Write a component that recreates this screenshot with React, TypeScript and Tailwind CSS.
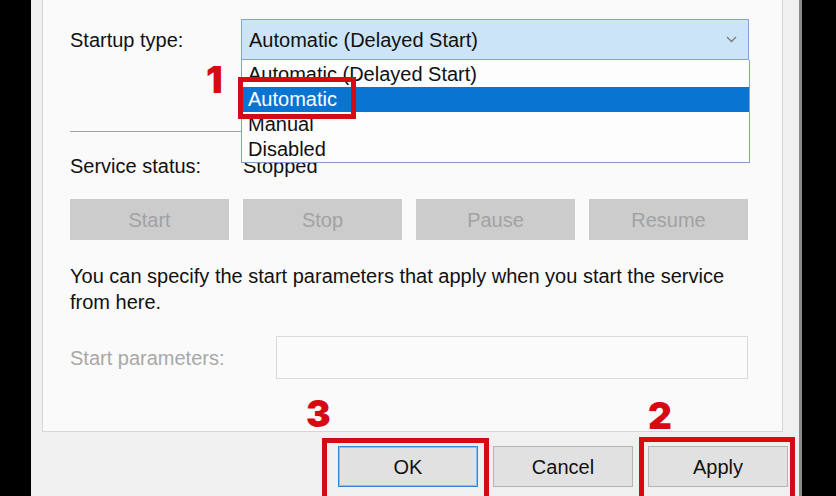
export default function App() {
  const options = ['Automatic (Delayed Start)', 'Automatic', 'Manual', 'Disabled'];

  return (
    <div className="relative flex h-[496px] w-[836px] overflow-hidden bg-black font-['Liberation_Sans',Arial,sans-serif] text-[20px] leading-[24px] text-[#111]">
      {/* Left black edge */}
      <div className="w-[31px] shrink-0" />

      {/* Dialog */}
      <div className="flex w-[771px] shrink-0 flex-col border-r-[3px] border-[#8a8a8a] bg-[#f0f0f0]">
        {/* Tab page */}
        <div className="ml-[11px] h-[432px] w-[741px] shrink-0 border-x border-b border-[#d6d6d6] bg-[#fafafa] pl-[27px] pr-[33px] pt-[19px]">
          <div className="relative">
            {/* Startup type */}
            <div className="flex h-[41px] items-center">
              <span className="w-[171px] shrink-0">Startup type:</span>
              <div className="flex h-full flex-1 items-center justify-between border border-[#7fa7d1] bg-[#cce4f7] pl-[7px] pr-[11px]">
                <span>Automatic (Delayed Start)</span>
                <svg width="11" height="7" viewBox="0 0 11 7" fill="none" stroke="#7a7a7a" strokeWidth="1.3">
                  <path d="M1 1l4.5 4.5L10 1" />
                </svg>
              </div>
            </div>

            {/* Open dropdown list */}
            <div className="absolute left-[171px] top-[41px] z-10 w-[509px] border border-t-0 border-[#7f9fc4] bg-[#fdfdfd] pt-[2px]">
              {options.map((opt, i) => (
                <div
                  key={opt}
                  className={`h-[25px] pl-[6px] leading-[25px] ${
                    i === 1 ? 'bg-[#0a74d3] text-white' : 'text-[#111]'
                  }`}
                >
                  {opt}
                </div>
              ))}
            </div>

            {/* Separator */}
            <div className="mt-[71px] h-px bg-[#a3a3a3]" />

            {/* Service status */}
            <div className="mt-[22px] flex">
              <span className="w-[173px] shrink-0">Service status:</span>
              <span>Stopped</span>
            </div>

            {/* Service buttons (disabled) */}
            <div className="mt-[21px] grid h-[41px] grid-cols-4 gap-[14px] pr-px">
              {['Start', 'Stop', 'Pause', 'Resume'].map((b) => (
                <div key={b} className="flex items-center justify-center bg-[#cccccc] text-[#a2a2a2]">
                  {b}
                </div>
              ))}
            </div>

            {/* Description */}
            <p className="mt-[23px] leading-[26px]">
              You can specify the start parameters that apply when you start the service from here.
            </p>

            {/* Start parameters */}
            <div className="mt-[21px] flex h-[43px] items-center pr-px">
              <span className="w-[206px] shrink-0 text-[#a8a8a8]">Start parameters:</span>
              <div className="h-full flex-1 border border-[#dadada] bg-[#fbfbfb]" />
            </div>
          </div>
        </div>

        {/* Dialog buttons */}
        <div className="flex justify-end gap-[15px] pr-[11px] pt-[14px]">
          <div className="flex h-[41px] w-[140px] items-center justify-center border border-[#2f86d6] bg-[#e1e1e1] shadow-[inset_0_0_0_1px_#8cc0ec]">
            OK
          </div>
          <div className="flex h-[41px] w-[140px] items-center justify-center border border-[#b4b4b4] bg-[#e1e1e1]">
            Cancel
          </div>
          <div className="flex h-[41px] w-[140px] items-center justify-center border border-[#b4b4b4] bg-[#e1e1e1]">
            Apply
          </div>
        </div>
      </div>

      {/* Annotations */}
      <div className="absolute left-[238px] top-[77px] z-20 h-[42px] w-[118px] border-[5px] border-[#d60a12]" />
      <div className="absolute left-[322px] top-[438px] z-20 h-[70px] w-[167px] border-[5px] border-[#d60a12]" />
      <div className="absolute left-[639px] top-[437px] z-20 h-[70px] w-[156px] border-[5px] border-[#d60a12]" />

      <span className="absolute left-[206px] top-[61px] z-20 font-['Inter',sans-serif] text-[37px] font-black leading-none text-[#d60a12]">1</span>
      <span className="absolute left-[306px] top-[395px] z-20 font-['Inter',sans-serif] text-[37px] font-black leading-none text-[#d60a12]">3</span>
      <span className="absolute left-[648px] top-[397px] z-20 font-['Inter',sans-serif] text-[37px] font-black leading-none text-[#d60a12]">2</span>
    </div>
  );
}
